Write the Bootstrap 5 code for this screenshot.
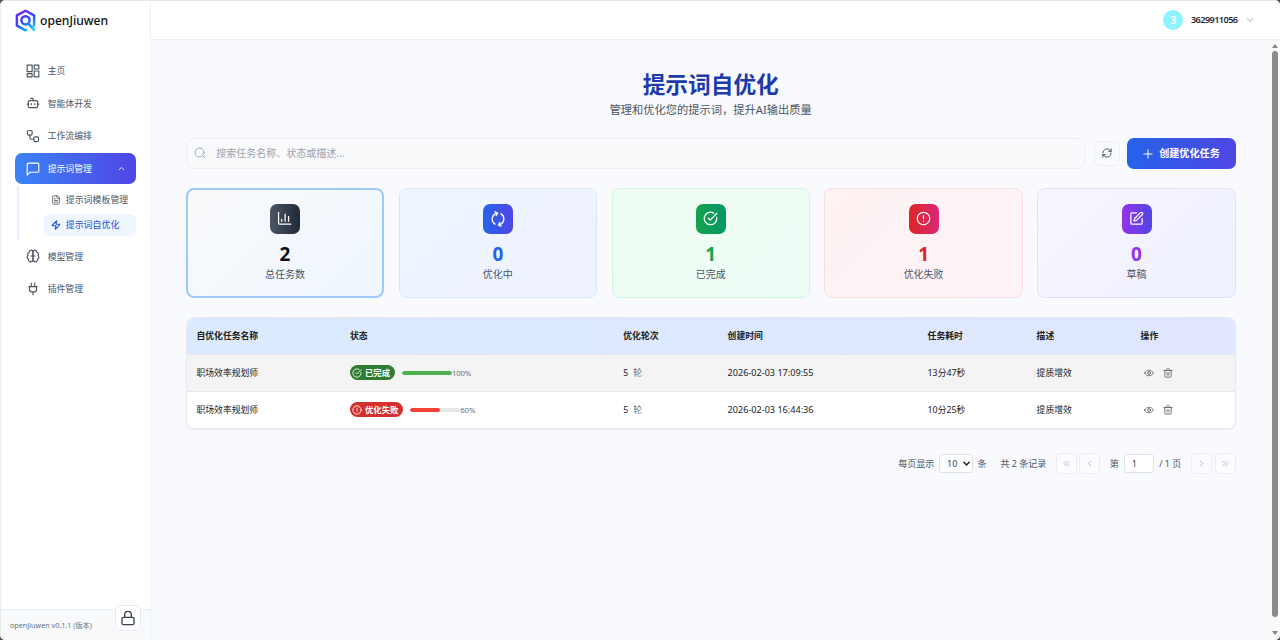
<!DOCTYPE html>
<html lang="zh-CN">
<head>
<meta charset="utf-8">
<meta name="viewport" content="width=device-width, initial-scale=1">
<title>openJiuwen</title>
<link href="https://cdn.jsdelivr.net/npm/bootstrap@5.3.0/dist/css/bootstrap.min.css" rel="stylesheet">
<style>
html{background:#4a4b50}
body{font-family:"Noto Sans","Noto Sans CJK SC",sans-serif;font-size:9px;line-height:1.5;background:#4a4b50;height:640px;overflow:hidden;color:#1f2937}
svg{fill:none;stroke-linejoin:round;flex:none;display:block}
svg:not([stroke]){stroke:currentColor}
svg:not([stroke-width]){stroke-width:2}
svg:not([stroke-linecap]){stroke-linecap:round}
.app{height:640px;border-radius:5px;overflow:hidden;background:#f8fafe;border-top:1px solid #e6e7ea;border-left:1px solid #e9eaec}
.side{width:150px;background:#fff;border-right:1px solid #eceff4}
.brand{height:39px;padding:2px 0 0 12.5px;gap:3.5px;font-size:12.1px;font-weight:500;color:#111}
.brand svg{margin-top:-3px}
.menu{padding:15.4px 14.500px 0 14px;gap:2.2px}
.item{height:30.5px;padding-left:11px;gap:7.7px;color:#4b5563;border-radius:7px;font-size:8.9px;letter-spacing:-.05px}
.item.on{background:linear-gradient(90deg,#3b82f6,#4f46e5);color:#fff}
.item.on .chev{margin:0 11px 0 auto}
.sub{margin-left:1.5px;border-left:2px solid #e3eefe;padding:2.600px 0 2.8px 25.5px;gap:2.2px}
.subitem{height:22.6px;border-radius:5px;padding-left:7px;gap:4.700px;color:#4b5563;font-size:8.95px}
.subitem.on{background:#eff6ff;color:#1d4ed8}
.foot{height:31px;border-top:1px solid #e3ebf5;background:#f8fafc;padding-left:9px;font-size:7.2px;color:#6b7280;position:relative}
.lock{position:absolute;right:9.5px;top:-5.5px;width:26px;height:26px;background:#fff;border:1px solid #e5e9f0;border-radius:5px;color:#374151}
.top{height:39px;background:#fff;border-bottom:1px solid #eceef3;padding-right:26px}
.ava{width:20px;height:20px;background:#8cf3ff;color:#fff;font-size:10px;font-weight:700}
.user{font-size:9.2px;font-weight:600;letter-spacing:-.6px;margin:0 8.5px 0 7.5px}
.work{padding:29.500px 34.8px 0 34.8px}
h1{font-size:22.7px;font-weight:700;line-height:30px;color:#1e3aa8;margin:0}
.desc{font-size:11.25px;line-height:18px;color:#4b5563;padding-top:1px}
.tools{margin-top:19.3px;gap:9.5px}
.search{height:31px;border:1px solid #eceef2;background:#f9fafc;border-radius:8px;padding-left:7px;gap:10.5px}
.search input{border:0;background:none;outline:0;padding:1px 0 0;font-size:10px;flex:1}
.search input::placeholder{color:#9ca3af;opacity:1}
.refresh{width:25.5px;height:25.5px;border:1px solid #eceef2;background:#f9fafc;border-radius:6px;color:#374151;padding:0}
.create{height:30.5px;width:108.5px;border:0;border-radius:7px;background:linear-gradient(90deg,#2563eb,#4f46e5);color:#fff;font-size:10.1px;font-weight:700;gap:6px;margin-left:-2px;padding:1px 0 0}
.stats{display:grid;grid-template-columns:repeat(5,1fr);gap:14.5px;margin-top:19.7px}
.stat{height:109.5px;border:1px solid;border-radius:8px;padding-top:14.5px}
.ico{width:30px;height:30px;border-radius:7px;color:#fff}
.num{font-size:19px;line-height:22px;font-weight:700;margin-top:9.2px}
.lbl{font-size:10px;line-height:15px;color:#4b5563;margin-top:2px}
.s1{background:linear-gradient(135deg,#f9fafb,#eff6ff);border:2px solid #9dc9fb;padding-top:13.5px}
.s2{background:linear-gradient(135deg,#eff6ff,#eef2ff);border-color:#d6e6fd}
.s3{background:linear-gradient(135deg,#f0fdf4,#ecfdf5);border-color:#d0f7dd}
.s4{background:linear-gradient(135deg,#fef2f2,#fdf2f8);border-color:#fbdcdf}
.s5{background:linear-gradient(135deg,#f7f5ff,#eff1ff);border-color:#e2dffa}
.sheet{margin-top:19.5px;border-radius:8px;overflow:hidden;border:1px solid #e5e9f0;background:#fff;box-shadow:0 1px 2px rgba(0,0,0,.06)}
.sheet table{table-layout:fixed;margin:0;font-size:8.8px;color:#212121}
.sheet thead{background:linear-gradient(90deg,#dbeafe,#e0e7ff)}
.sheet th,.sheet td{background:none!important;box-shadow:none!important;padding:0 0 0 9.7px!important;vertical-align:middle;border-bottom:1px solid #e4e7eb;line-height:14px;color:#212121}
.sheet th{height:35.6px;font-weight:700}
.sheet td{height:37px}
.sheet tbody tr:first-child{background:#f4f4f4}
.sheet tbody tr:last-child td{border:0;height:36.5px}
.sheet .when{font-size:9.1px}
.unit{color:#6b7280;margin-left:5px}
.pill{height:15px;border-radius:8px;padding:0 4.5px 0 2.5px;gap:2.5px;color:#fff;font-weight:600;font-size:8.35px;margin-right:7.5px}
.bar{width:50px;height:4px;border-radius:2px;background:#e8e8e8}
.bar .progress-bar{border-radius:2px}
.pct{font-size:7.8px;color:#6b7280;letter-spacing:-.2px}
.ops{gap:9px;color:#5f5f5f;padding-left:3.3px}
.pager{margin-top:24.5px;height:21px;color:#4b5563;font-size:9px}
.pager select,.pager input{height:19px;border:1px solid #dfe3e9;border-radius:3px;background:#fff;color:#374151;font-size:9px;outline:0}
.pick{position:relative;margin:0 4.800px}
.pager select{display:block;width:33.5px;padding:0 0 0 7px;appearance:none}
.pick svg{position:absolute;right:2.5px;top:6px}
.pager input{width:30.500px;padding:0 0 0 7px;margin:0 5px}
.pg{width:21.2px;height:21.2px;border:1px solid #eceef2;background:#fbfcfe;border-radius:4px;color:#a3a8b1;padding:0}
.scroll{width:9.5px;flex:none;background:#fafafb}
.thumb{width:6px;flex:none;height:566px;border-radius:3px;background:#8a8a8a;margin:3px 0 14px}
.tri{border:3px solid transparent;border-top:0;border-bottom:4px solid #858585;margin:4px 0 0}
.tri.dn{transform:rotate(180deg);margin:0}
</style>
</head>
<body>
<div class="app d-flex">
  <aside class="side d-flex flex-column flex-shrink-0">
    <div class="brand d-flex align-items-center">
      <svg width="23" height="23" viewBox="0 0 24 24" stroke="url(#lg)" stroke-width="2.6" stroke-linecap="butt"><defs><linearGradient id="lg" gradientUnits="userSpaceOnUse" x1="6" y1="2" x2="18" y2="23"><stop offset="0" stop-color="#7a1dff"/><stop offset=".5" stop-color="#2f4bff"/><stop offset="1" stop-color="#12d8ff"/></linearGradient></defs><path d="M13.5 21.6 12 22.3 3 17.3V6.7L12 1.8l9 4.9v10.6l-1.2.8"/><circle cx="12" cy="11.8" r="4.3"/><path d="m14.8 15 6.8 7.6"/></svg>
      <span>openJiuwen</span>
    </div>
    <nav class="menu d-flex flex-column flex-grow-1">
      <div class="item d-flex align-items-center"><svg width="14" height="14" viewBox="0 0 24 24"><rect x="2" y="2" width="8.5" height="11"/><rect x="14" y="2" width="8" height="6.5"/><rect x="14" y="12" width="8" height="10"/><rect x="2" y="16.5" width="8.5" height="5.5"/></svg>主页</div>
      <div class="item d-flex align-items-center"><svg width="14" height="14" viewBox="0 0 24 24"><path d="M12 8V4H8"/><rect x="4" y="8" width="16" height="12" rx="2"/><path d="M2 14h2M20 14h2M15 13v2M9 13v2"/></svg>智能体开发</div>
      <div class="item d-flex align-items-center"><svg width="14" height="14" viewBox="0 0 24 24"><rect x="2.5" y="2.5" width="8" height="8" rx="2"/><path d="M6.500 10.500v4a3 3 0 0 0 3 3h4"/><rect x="13.500" y="13.500" width="8" height="8" rx="2"/></svg>工作流编排</div>
      <div class="item on d-flex align-items-center"><svg width="14" height="14" viewBox="0 0 24 24"><path d="M22 15.500a2 2 0 0 1-2 2H7l-5 5V4a2 2 0 0 1 2-2h16a2 2 0 0 1 2 2z"/></svg>提示词管理<svg class="chev" width="7" height="7" viewBox="0 0 24 24" stroke-width="3"><path d="m4 16 8-8 8 8"/></svg></div>
      <div class="sub d-flex flex-column">
        <div class="subitem d-flex align-items-center"><svg width="10" height="10" viewBox="0 0 24 24"><path d="M15 2H6a2 2 0 0 0-2 2v16a2 2 0 0 0 2 2h12a2 2 0 0 0 2-2V7z"/><path d="M14 2v4a2 2 0 0 0 2 2h4M10 9H8M16 13H8M16 17H8"/></svg>提示词模板管理</div>
        <div class="subitem on d-flex align-items-center"><svg width="10" height="10" viewBox="0 0 24 24" stroke-width="2.500"><path d="M4 14a1 1 0 0 1-.78-1.630l9.900-10.200a.5.5 0 0 1 .86.460l-1.920 6.020A1 1 0 0 0 13 10h7a1 1 0 0 1 .78 1.630l-9.900 10.200a.5.5 0 0 1-.86-.460l1.920-6.020A1 1 0 0 0 11 14z"/></svg>提示词自优化</div>
      </div>
      <div class="item d-flex align-items-center"><svg width="14" height="14" viewBox="0 0 24 24"><path d="M12 5a3 3 0 1 0-5.997.125 4 4 0 0 0-2.526 5.770 4 4 0 0 0 .556 6.588A4 4 0 1 0 12 18Z"/><path d="M12 5a3 3 0 1 1 5.997.125 4 4 0 0 1 2.526 5.770 4 4 0 0 1-.556 6.588A4 4 0 1 1 12 18Z"/><path d="M8.500 12h7"/></svg>模型管理</div>
      <div class="item d-flex align-items-center"><svg width="14" height="14" viewBox="0 0 24 24"><path d="M12 22v-5M9 8V2M15 8V2M18 8v5a4 4 0 0 1-4 4h-4a4 4 0 0 1-4-4V8zM5 8h14"/></svg>插件管理</div>
    </nav>
    <div class="foot d-flex align-items-center">openJiuwen v0.1.1 (版本)
      <div class="lock d-flex align-items-center justify-content-center"><svg width="16" height="16" viewBox="0 0 24 24"><rect x="3" y="11" width="18" height="11" rx="2"/><path d="M7 11V7a5 5 0 0 1 10 0v4"/></svg></div>
    </div>
  </aside>
  <div class="flex-grow-1 d-flex flex-column">
    <header class="top d-flex align-items-center justify-content-end">
      <div class="ava rounded-circle d-flex align-items-center justify-content-center">3</div>
      <span class="user">3629911056</span>
      <svg width="8" height="8" viewBox="0 0 24 24" stroke="#9ca3af" stroke-width="2.800"><path d="m4 8 8 8 8-8"/></svg>
    </header>
    <div class="d-flex flex-grow-1">
      <main class="work flex-grow-1">
        <div class="text-center">
          <h1>提示词自优化</h1>
          <div class="desc">管理和优化您的提示词，提升AI输出质量</div>
        </div>
        <div class="tools d-flex align-items-center">
          <div class="search d-flex align-items-center flex-grow-1"><svg width="12" height="12" viewBox="0 0 24 24" stroke="#9ca3af"><circle cx="11" cy="11" r="9"/><path d="m22 22-4.500-4.500"/></svg><input type="text" placeholder="搜索任务名称、状态或描述..."></div>
          <button class="refresh d-flex align-items-center justify-content-center"><svg width="10" height="10" viewBox="0 0 24 24"><path d="M2 12a10 10 0 0 1 17-7.100L22 8M22 2v6h-6M22 12a10 10 0 0 1-17 7.100L2 16M8 16H2v6"/></svg></button>
          <button class="create d-flex align-items-center justify-content-center"><svg width="10" height="10" viewBox="0 0 24 24" stroke-width="2.400"><path d="M12 2v20M2 12h20"/></svg>创建优化任务</button>
        </div>
        <div class="stats">
          <div class="stat s1 d-flex flex-column align-items-center"><div class="ico d-flex align-items-center justify-content-center" style="background:linear-gradient(90deg,#4b5563,#1f2937)"><svg width="15" height="15" viewBox="0 0 24 24"><path d="M2.500 2v17a2 2 0 0 0 2 2H22M7.500 16.500v-3M13 16.500V5M18.500 16.500V8.500"/></svg></div><div class="num" style="color:#0b1020">2</div><div class="lbl">总任务数</div></div>
          <div class="stat s2 d-flex flex-column align-items-center"><div class="ico d-flex align-items-center justify-content-center" style="background:linear-gradient(90deg,#2563eb,#4f46e5)"><svg width="16" height="16" viewBox="0 0 24 24"><path d="M7.500 19.600A9 9 0 0 1 10.500 3.200M7.500 1.200l4 1.900-2.500 3.700M16.500 4.400a9 9 0 0 1-3 16.400M16.500 22.800l-4-1.900 2.500-3.700"/></svg></div><div class="num" style="color:#2563eb">0</div><div class="lbl">优化中</div></div>
          <div class="stat s3 d-flex flex-column align-items-center"><div class="ico d-flex align-items-center justify-content-center" style="background:linear-gradient(90deg,#16a34a,#059669)"><svg width="15" height="15" viewBox="0 0 24 24"><path d="M21.800 10A10 10 0 1 1 17 3.335M8.500 11.500l3 3L22 4"/></svg></div><div class="num" style="color:#16a34a">1</div><div class="lbl">已完成</div></div>
          <div class="stat s4 d-flex flex-column align-items-center"><div class="ico d-flex align-items-center justify-content-center" style="background:linear-gradient(90deg,#dc2626,#db2777)"><svg width="15" height="15" viewBox="0 0 24 24"><circle cx="12" cy="12" r="10"/><path d="M12 7.500v5M12 16.300v.1"/></svg></div><div class="num" style="color:#dc2626">1</div><div class="lbl">优化失败</div></div>
          <div class="stat s5 d-flex flex-column align-items-center"><div class="ico d-flex align-items-center justify-content-center" style="background:linear-gradient(90deg,#9333ea,#4f46e5)"><svg width="15" height="15" viewBox="0 0 24 24"><path d="M12 3H5a2 2 0 0 0-2 2v14a2 2 0 0 0 2 2h14a2 2 0 0 0 2-2v-7"/><path d="M18.375 2.625a2.120 2.120 0 1 1 3 3L12 15l-4 1 1-4Z"/></svg></div><div class="num" style="color:#9333ea">0</div><div class="lbl">草稿</div></div>
        </div>
        <div class="sheet">
          <table class="table">
            <colgroup><col style="width:153.500px"><col style="width:273.300px"><col style="width:104.300px"><col style="width:200px"><col style="width:109px"><col style="width:104px"><col></colgroup>
            <thead><tr><th>自优化任务名称</th><th>状态</th><th>优化轮次</th><th>创建时间</th><th>任务耗时</th><th>描述</th><th>操作</th></tr></thead>
            <tbody>
              <tr><td>职场效率规划师</td><td><div class="d-flex align-items-center"><span class="pill d-flex align-items-center" style="background:#2e7d32"><svg width="10" height="10" viewBox="0 0 24 24"><path d="M21.800 10A10 10 0 1 1 17 3.335M8.500 11.500l3 3L22 4"/></svg>已完成</span><div class="bar progress"><div class="progress-bar" style="width:100%;background:#4caf50"></div></div><span class="pct">100%</span></div></td><td>5<span class="unit">轮</span></td><td class="when">2026-02-03 17:09:55</td><td>13分47秒</td><td>提质增效</td><td><div class="ops d-flex align-items-center"><svg width="10" height="10" viewBox="0 0 24 24"><path d="M1.500 12C6 3 18 3 22.500 12 18 21 6 21 1.500 12Z"/><circle cx="12" cy="12" r="3.500"/></svg><svg width="10" height="10" viewBox="0 0 24 24"><path d="M2 6h20M19.500 6v14a2 2 0 0 1-2 2h-11a2 2 0 0 1-2-2V6M8 6V4a2 2 0 0 1 2-2h4a2 2 0 0 1 2 2v2M10 11v6M14 11v6"/></svg></div></td></tr>
              <tr><td>职场效率规划师</td><td><div class="d-flex align-items-center"><span class="pill d-flex align-items-center" style="background:#d32f2f"><svg width="10" height="10" viewBox="0 0 24 24"><circle cx="12" cy="12" r="10"/><path d="M12 7v6M12 16.500v.1"/></svg>优化失败</span><div class="bar progress"><div class="progress-bar" style="width:60%;background:#f44336"></div></div><span class="pct">60%</span></div></td><td>5<span class="unit">轮</span></td><td class="when">2026-02-03 16:44:36</td><td>10分25秒</td><td>提质增效</td><td><div class="ops d-flex align-items-center"><svg width="10" height="10" viewBox="0 0 24 24"><path d="M1.500 12C6 3 18 3 22.500 12 18 21 6 21 1.500 12Z"/><circle cx="12" cy="12" r="3.500"/></svg><svg width="10" height="10" viewBox="0 0 24 24"><path d="M2 6h20M19.500 6v14a2 2 0 0 1-2 2h-11a2 2 0 0 1-2-2V6M8 6V4a2 2 0 0 1 2-2h4a2 2 0 0 1 2 2v2M10 11v6M14 11v6"/></svg></div></td></tr>
            </tbody>
          </table>
        </div>
        <div class="pager d-flex align-items-center justify-content-end">
          <span>每页显示</span><div class="pick"><select><option>10</option></select><svg width="7" height="7" viewBox="0 0 24 24" stroke="#222" stroke-width="5"><path d="m3 8 9 9 9-9"/></svg></div><span>条</span>
          <span style="margin:0 9.500px 0 14px">共 2 条记录</span>
          <button class="pg d-flex align-items-center justify-content-center"><svg width="9" height="9" viewBox="0 0 24 24"><path d="m11 18-6-6 6-6M19 18l-6-6 6-6"/></svg></button>
          <button class="pg d-flex align-items-center justify-content-center" style="margin:0 9.500px 0 2px"><svg width="9" height="9" viewBox="0 0 24 24"><path d="m15 18-6-6 6-6"/></svg></button>
          <span>第</span><input type="text" value="1"><span>/ 1 页</span>
          <button class="pg d-flex align-items-center justify-content-center" style="margin:0 2.500px 0 9.500px"><svg width="9" height="9" viewBox="0 0 24 24"><path d="m9 18 6-6-6-6"/></svg></button>
          <button class="pg d-flex align-items-center justify-content-center"><svg width="9" height="9" viewBox="0 0 24 24"><path d="m5 18 6-6-6-6M13 18l6-6-6-6"/></svg></button>
        </div>
      </main>
      <div class="scroll d-flex flex-column align-items-center"><div class="tri"></div><div class="thumb"></div><div class="tri dn"></div></div>
    </div>
  </div>
</div>
<script src="https://cdn.jsdelivr.net/npm/bootstrap@5.3.0/dist/js/bootstrap.bundle.min.js"></script>
</body>
</html>
